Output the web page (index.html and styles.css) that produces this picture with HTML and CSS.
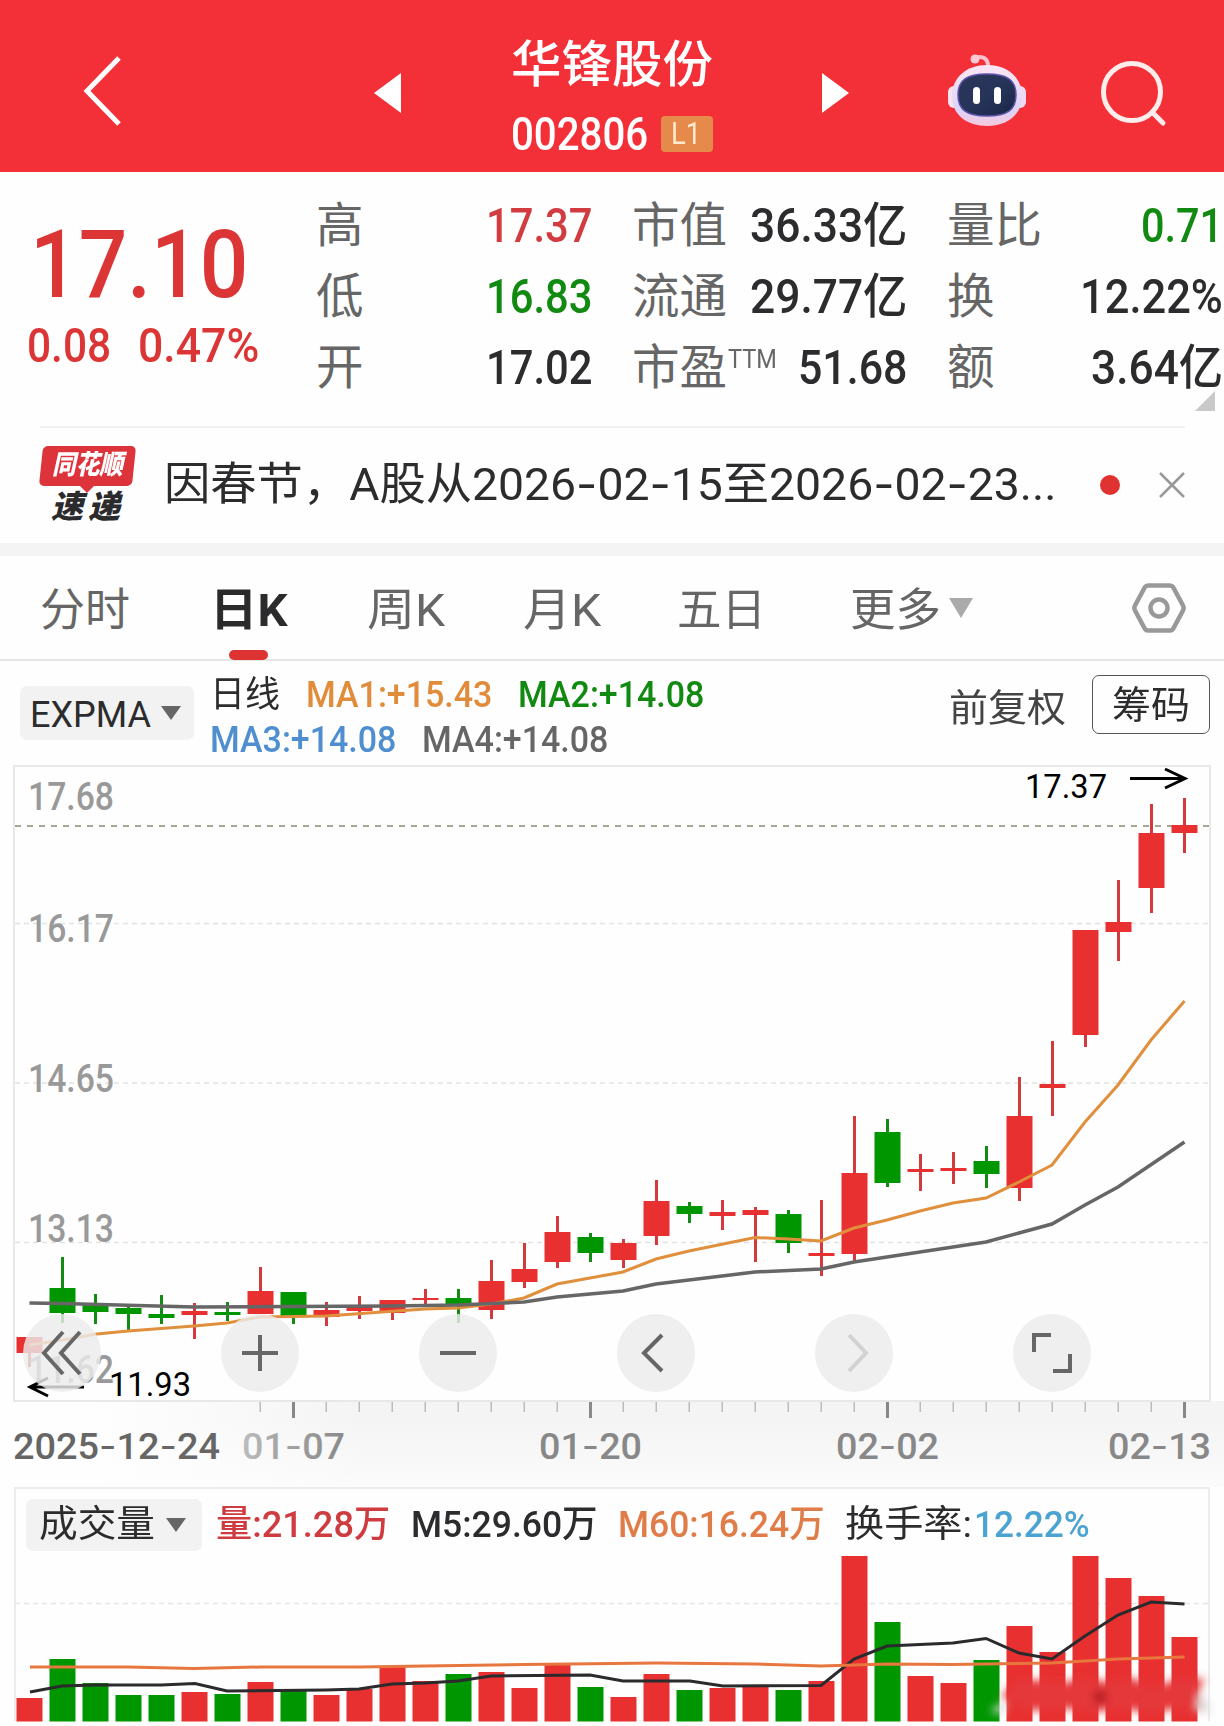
FILE: index.html
```
<!DOCTYPE html>
<html lang="zh-CN">
<head>
  <meta charset="UTF-8" />
  <meta name="viewport" content="width=device-width, initial-scale=1.0" />
  <title>华锋股份 002806</title>
  <link rel="stylesheet" href="styles.css">
</head>

<body>
  <!-- Header -->
  <header class="header">
    <svg class="back" width="40" height="70" viewBox="0 0 40 70"><path d="M37 2 L5 35 L37 68" /></svg>
    <svg class="prev" width="27" height="40" viewBox="0 0 27 40"><path d="M27 0 V40 L0 20 Z" /></svg>
    <div class="stock">
      <div class="stock-name"><span data-w="202">华锋股份</span></div>
      <div class="stock-code"><span data-w="137">002806</span><span class="level"><span data-w="30">L1</span></span></div>
    </div>
    <svg class="next" width="27" height="40" viewBox="0 0 27 40"><path d="M0 0 V40 L27 20 Z" /></svg>
    <svg class="robot" width="80" height="76" viewBox="0 0 80 76">
      <defs>
        <linearGradient id="head" x1="0" y1="0" x2="0" y2="1">
          <stop offset="0" stop-color="#fbe6f4" />
          <stop offset="0.75" stop-color="#ddd3f8" />
          <stop offset="1" stop-color="#f6c8dc" />
        </linearGradient>
        <linearGradient id="face" x1="0" y1="0" x2="1" y2="1">
          <stop offset="0" stop-color="#2a3558" />
          <stop offset="0.5" stop-color="#27345a" />
          <stop offset="1" stop-color="#1b2748" />
        </linearGradient>
      </defs>
      <path d="M28 7 C36 4 41 8 41 15" fill="none" stroke="#f9bfcb" stroke-width="4" />
      <circle cx="28" cy="8" r="4.5" fill="#fbc9d3" />
      <rect x="1" y="35" width="14" height="22" rx="6" fill="#f7e4f0" />
      <rect x="65" y="35" width="14" height="22" rx="6" fill="#f0daf2" />
      <path d="M40 14 C60 14 75 26 75 45 C75 64 60 75 40 75 C20 75 5 64 5 45 C5 26 20 14 40 14 Z" fill="url(#head)" />
      <path d="M40 23 C60 23 69 29 69 44 C69 59 60 65 40 65 C20 65 11 59 11 44 C11 29 20 23 40 23 Z" fill="url(#face)" stroke="#5c54a8" stroke-width="1.5" />
      <rect x="26" y="36" width="7" height="17" rx="3.5" fill="#fff" />
      <rect x="47" y="36" width="7" height="17" rx="3.5" fill="#fff" />
    </svg>
    <svg class="search" width="68" height="68" viewBox="0 0 68 68"><circle cx="32" cy="32" r="28.5" /><path d="M52 52 L63 63" /></svg>
  </header>

  <!-- Quote -->
  <section class="quote">
    <div class="last">
      <div class="price"><span data-w="218">17.10</span></div>
      <div class="change"><span data-w="84">0.08</span><span data-w="121">0.47%</span></div>
    </div>
    <dl class="col col-a">
      <div><dt>高</dt><dd class="up"><span data-w="106">17.37</span></dd></div>
      <div><dt>低</dt><dd class="down"><span data-w="106">16.83</span></dd></div>
      <div><dt>开</dt><dd><span data-w="106">17.02</span></dd></div>
    </dl>
    <dl class="col col-b">
      <div><dt>市值</dt><dd><span data-w="157">36.33亿</span></dd></div>
      <div><dt>流通</dt><dd><span data-w="157">29.77亿</span></dd></div>
      <div><dt>市盈<sup><span data-w="49">TTM</span></sup></dt><dd><span data-w="109">51.68</span></dd></div>
    </dl>
    <dl class="col col-c">
      <div><dt>量比</dt><dd class="down"><span data-w="82">0.71</span></dd></div>
      <div><dt>换</dt><dd><span data-w="143">12.22%</span></dd></div>
      <div><dt>额</dt><dd><span data-w="132">3.64亿</span></dd></div>
    </dl>
    <i class="corner"></i>
  </section>

  <!-- News -->
  <section class="news">
    <div class="news-logo">
      <div class="bubble"><span data-w="71">同花顺</span></div>
      <div class="express"><span>速</span><span>递</span></div>
    </div>
    <div class="news-text"><span data-w="892">因春节，A股从2026<b>-</b>02<b>-</b>15至2026<b>-</b>02<b>-</b>23...</span></div>
    <i class="dot"></i>
    <svg class="close" width="28" height="28" viewBox="0 0 28 28"><path d="M2 2 L26 26 M26 2 L2 26" /></svg>
  </section>

  <!-- Tabs -->
  <nav class="tabs">
    <a class="tab t1"><span data-w="90">分时</span></a>
    <a class="tab t2 active"><span data-w="78">日K</span></a>
    <a class="tab t3"><span data-w="78">周K</span></a>
    <a class="tab t4"><span data-w="78">月K</span></a>
    <a class="tab t5"><span data-w="89">五日</span></a>
    <a class="tab t6"><span data-w="91">更多</span><i class="caret"></i></a>
    <svg class="setting" width="54" height="50" viewBox="0 0 54 50"><path d="M16 2.5 H38 Q40 2.5 41 4 L51 22.5 Q52.300 25 51 27.500 L41 46 Q40 47.500 38 47.500 H16 Q14 47.500 13 46 L3 27.500 Q1.700 25 3 22.500 L13 4 Q14 2.500 16 2.500 Z" /><circle cx="27" cy="25" r="8.500" /></svg>
  </nav>

  <!-- Indicator -->
  <section class="indicator">
    <div class="select"><span data-w="121">EXPMA</span><i class="caret"></i></div>
    <div class="ma">
      <div class="ma-row"><span class="line" data-w="70">日线</span><span class="ma1" data-w="186">MA1:+15.43</span><span class="ma2" data-w="186">MA2:+14.08</span></div>
      <div class="ma-row"><span class="ma3" data-w="186">MA3:+14.08</span><span class="ma4" data-w="186">MA4:+14.08</span></div>
    </div>
    <div class="adjust"><span data-w="117">前复权</span></div>
    <div class="chips"><span data-w="78">筹码</span></div>
  </section>

  <!-- K line -->
  <section class="kline">
    <svg id="kchart" width="1224" height="722" viewBox="0 765 1224 722"></svg>
    <div class="tools">
      <button><svg width="42" height="46" viewBox="0 0 42 46"><path d="M22 2 L3 23 L22 44 M39 2 L20 23 L39 44" /></svg></button>
      <button><svg width="40" height="40" viewBox="0 0 40 40"><path d="M2 20 H38 M20 2 V38" /></svg></button>
      <button><svg width="40" height="40" viewBox="0 0 40 40"><path d="M2 20 H38" /></svg></button>
      <button><svg width="40" height="40" viewBox="0 0 40 40"><path d="M26 2 L8 20 L26 38" /></svg></button>
      <button class="off"><svg width="40" height="40" viewBox="0 0 40 40"><path d="M15 2 L32 20 L15 38" /></svg></button>
      <button><svg width="42" height="42" viewBox="0 0 42 42"><path d="M3 20 V3 H20 M39 22 V39 H22" /></svg></button>
    </div>
  </section>

  <!-- Volume -->
  <section class="volume">
    <div class="vol-head">
      <div class="select"><span data-w="116">成交量</span><i class="caret"></i></div>
      <span class="v1" data-w="174">量:21.28万</span>
      <span class="v2" data-w="187">M5:29.60万</span>
      <span class="v3" data-w="207">M60:16.24万</span>
      <span class="v4" data-w="127">换手率:</span>
      <span class="v5" data-w="116">12.22%</span>
    </div>
    <svg id="vchart" width="1224" height="175" viewBox="0 1551 1224 175"></svg>
  </section>

  <script src="script.js"></script>
</body>
</html>
```
FILE: styles.css
```
* {
  box-sizing: border-box;
  margin: 0;
  padding: 0;
}

body {
  width: 1224px;
  height: 1726px;
  overflow: hidden;
  background: #fefefe;
  color: #2c2c2e;
  font-family: Roboto, "Noto Sans CJK SC", sans-serif;
}

svg {
  display: block;
  flex: none;
}

i {
  display: block;
  flex: none;
}

[data-w] {
  display: inline-block;
  white-space: nowrap;
  transform-origin: 0 50%;
}

/* header */
.header {
  display: flex;
  align-items: flex-start;
  height: 172px;
  background: #f32f38;
  color: #fff;
}

.back {
  margin: 56px 0 0 82px;
  fill: none;
  stroke: #fff;
  stroke-width: 5;
}

.prev,
.next {
  margin-top: 73px;
  fill: #fff;
}

.prev {
  margin-left: 252px;
}

.stock {
  width: 202px;
  margin: 35px 0 0 110px;
}

.stock-name {
  height: 63px;
  font-size: 50px;
  font-weight: 500;
  line-height: 60px;
}

.stock-code {
  display: flex;
  align-items: center;
  height: 71px;
  font-size: 47px;
  font-weight: 500;
}

.level {
  height: 36px;
  width: 52px;
  margin-left: 13px;
  padding-left: 10px;
  border-radius: 4px;
  background: #e68a4b;
  color: #ffe9cf;
  font-size: 31px;
  font-weight: 400;
  line-height: 36px;
}

.next {
  margin-left: 109px;
}

.robot {
  margin: 51px 0 0 98px;
}

.search {
  margin: 60px 0 0 73px;
  fill: none;
  stroke: #ffeceb;
  stroke-width: 5;
  stroke-linecap: round;
}

/* quote */
.quote {
  position: relative;
  display: flex;
  height: 254px;
}

.last {
  width: 316px;
  padding-left: 27px;
  color: #dc3535;
}

.price {
  height: 124px;
  padding: 35px 0 0 3px;
  font-size: 95px;
  font-weight: 500;
  line-height: 116px;
}

.change {
  display: flex;
  gap: 27px;
  padding-top: 20px;
  font-size: 49px;
  font-weight: 500;
  line-height: 60px;
}

.col {
  padding-top: 18px;
}

.col > div {
  display: flex;
  justify-content: space-between;
  height: 71px;
  line-height: 72px;
}

.col-a {
  width: 276px;
}

.col-b {
  width: 275px;
  margin-left: 40px;
}

.col-c {
  width: 276px;
  margin-left: 40px;
}

.col dt {
  color: #666;
  font-size: 47.5px;
}

.col dt sup {
  display: inline-block;
  margin-left: 1px;
  font-size: 25px;
  line-height: 25px;
  vertical-align: 16px;
}

.col dd {
  font-size: 48px;
  font-weight: 500;
}

.col .up {
  color: #d23c40;
}

.col .down {
  color: #128a12;
}

.corner {
  position: absolute;
  right: 9px;
  bottom: 15px;
  border-left: 20px solid transparent;
  border-bottom: 20px solid #c9c9c9;
}

/* news */
.news {
  display: flex;
  align-items: center;
  height: 130px;
  border-bottom: 13px solid #f4f4f4;
  position: relative;
}

.news::before {
  content: "";
  position: absolute;
  left: 40px;
  right: 39px;
  top: 0;
  height: 2px;
  background: #f0f0f0;
}

.news-logo {
  flex: none;
  width: 164px;
  padding-left: 41px;
}

.bubble {
  position: relative;
  width: 93px;
  height: 40px;
  padding-left: 11px;
  color: #fff;
  font-size: 27px;
  font-weight: 900;
  line-height: 38px;
  z-index: 0;
}

.bubble span,
.express span {
  font-style: italic;
}

.bubble::before {
  content: "";
  position: absolute;
  inset: 0;
  border-radius: 5px;
  background: #dd333a;
  transform: skewX(-6deg);
  z-index: -1;
}

.bubble::after {
  content: "";
  position: absolute;
  left: 38px;
  top: 39px;
  border: 8px solid transparent;
  border-top-color: #dd333a;
  border-bottom: 0;
}

.express {
  display: flex;
  gap: 5px;
  height: 38px;
  padding-left: 10px;
  color: #2b2b2d;
  font-size: 32px;
  font-weight: 900;
  line-height: 43px;
}

.news-text {
  flex: none;
  width: 892px;
  font-size: 45px;
  line-height: 60px;
}

.news-text b,
.kline .dash {
  font-family: Inter, sans-serif;
  font-weight: 400;
}

.dot {
  width: 20px;
  height: 20px;
  margin-left: 44px;
  border-radius: 50%;
  background: #e13232;
}

.close {
  margin-left: 38px;
  fill: none;
  stroke: #999;
  stroke-width: 2.5;
}

/* tabs */
.tabs {
  display: flex;
  align-items: center;
  height: 105px;
  border-bottom: 2px solid #e6e6e6;
  color: #666;
  font-size: 45px;
}

.tab {
  position: relative;
  display: flex;
  align-items: center;
  height: 103px;
  padding-bottom: 2px;
}

.t1 { margin-left: 40px; }
.t2 { margin-left: 80px; }
.t3 { margin-left: 79px; }
.t4 { margin-left: 78px; }
.t5 { margin-left: 76px; }
.t6 { margin-left: 84px; }

.active {
  color: #2b2b2d;
  font-weight: 700;
}

.active::after {
  content: "";
  position: absolute;
  left: 19px;
  bottom: -1px;
  width: 39px;
  height: 10px;
  border-radius: 5px;
  background: #dd3333;
}

.caret {
  border: 10px solid transparent;
  border-top: 14px solid #666;
  border-bottom: 0;
}

.tab .caret {
  margin: 2px 0 0 8px;
  border-width: 20px 12px 0;
  border-top-color: #aaa;
}

.setting {
  margin-left: 159px;
  fill: none;
  stroke: #999;
  stroke-width: 4.5;
}

/* indicator */
.indicator {
  display: flex;
  align-items: flex-start;
  height: 104px;
  font-size: 36px;
}

.select {
  display: flex;
  align-items: center;
  border-radius: 7px;
  background: #f2f2f2;
}

.indicator .select {
  width: 174px;
  height: 54px;
  margin: 25px 0 0 20px;
  padding-left: 10px;
}

.indicator .select span {
  padding-top: 3px;
}

.indicator .caret {
  margin-left: 10px;
}

.ma {
  width: 739px;
  margin-left: 16px;
  padding-top: 11px;
}

.ma-row {
  display: flex;
  height: 45px;
  line-height: 46px;
}

.ma-row span {
  margin-right: 26px;
  font-weight: 500;
}

.ma-row .line {
  font-weight: 400;
}

.ma1 { color: #e08c3a; }
.ma2 { color: #128a12; }
.ma3 { color: #4f8fd0; }
.ma4 { color: #666; }

.adjust {
  width: 143px;
  padding-top: 22px;
  color: #444;
  font-size: 38px;
  line-height: 50px;
}

.chips {
  width: 118px;
  height: 59px;
  margin-top: 14px;
  padding-left: 19px;
  border: 1.5px solid #555;
  border-radius: 7px;
  font-size: 38px;
  line-height: 58px;
}

/* k line */
.kline {
  position: relative;
  height: 722px;
}

.kline text {
  font-size: 37px;
}

.tools {
  position: absolute;
  left: 23px;
  top: 549px;
  display: flex;
  gap: 120px;
}

.tools button {
  display: flex;
  align-items: center;
  justify-content: center;
  width: 78px;
  height: 78px;
  border: 0;
  border-radius: 50%;
  background: rgba(235, 235, 235, 0.82);
}

.tools svg {
  fill: none;
  stroke: #666;
  stroke-width: 4;
}

.tools .off svg {
  stroke: #d2d2d2;
}

/* volume */
.volume {
  height: 239px;
}

.vol-head {
  display: flex;
  align-items: flex-start;
  height: 64px;
  margin: 0 14px;
  padding-top: 10px;
  border: 2px solid #ececec;
  border-width: 2px 2px 0;
  font-size: 37px;
  line-height: 52px;
}

.vol-head .select {
  width: 176px;
  height: 52px;
  margin-left: 10px;
  padding-left: 13px;
}

.vol-head .caret {
  margin-left: 11px;
}

.v1 { margin-left: 14px; color: #cf3c40; }
.v2 { margin-left: 21px; }
.v3 { margin-left: 20px; color: #e07c48; }
.v4 { margin-left: 21px; }
.v5 { margin-left: 2px; color: #4ba3d2; }

.v1,
.v2,
.v3,
.v5 {
  font-weight: 500;
}
```
FILE: script.js
```
// squeeze each label to its own width
document.querySelectorAll("[data-w]").forEach((el) => {
  const w = parseFloat(el.dataset.w);
  const natural = el.offsetWidth;
  const margin = parseFloat(getComputedStyle(el).marginRight);
  el.style.transform = "scaleX(" + w / natural + ")";
  el.style.marginRight = margin + w - natural + "px";
});

const RED = "#e83030";
const GREEN = "#009600";
const X = (i) => 29.5 + 33 * i;

// color, high, body top, body bottom, low
const candles = [
  ["r", 1337, 1337, 1353, 1367], ["g", 1257, 1288, 1313, 1323], ["g", 1294, 1303, 1312, 1324], ["g", 1306, 1308, 1314, 1332],
  ["g", 1295, 1314, 1318, 1324], ["r", 1303, 1311, 1315, 1339], ["g", 1302, 1312, 1315, 1321], ["r", 1267, 1291, 1314, 1314],
  ["g", 1292, 1292, 1316, 1324], ["r", 1302, 1310, 1317, 1326], ["r", 1296, 1306, 1311, 1319], ["r", 1300, 1300, 1313, 1320],
  ["r", 1289, 1298, 1300, 1305], ["g", 1289, 1298, 1305, 1323], ["r", 1260, 1281, 1310, 1319], ["r", 1243, 1269, 1282, 1288],
  ["r", 1216, 1232, 1262, 1268], ["g", 1233, 1237, 1253, 1262], ["r", 1239, 1243, 1260, 1268], ["r", 1180, 1201, 1236, 1245],
  ["g", 1202, 1206, 1214, 1223], ["r", 1200, 1212, 1216, 1230], ["r", 1207, 1210, 1215, 1262], ["g", 1210, 1214, 1243, 1253],
  ["r", 1200, 1253, 1256, 1276], ["r", 1116, 1173, 1254, 1262], ["g", 1119, 1132, 1183, 1187], ["r", 1154, 1169, 1172, 1191],
  ["r", 1152, 1168, 1171, 1184], ["g", 1146, 1161, 1174, 1188], ["r", 1077, 1116, 1188, 1201], ["r", 1041, 1084, 1088, 1116],
  ["r", 930, 930, 1035, 1047], ["r", 880, 922, 932, 961], ["r", 804, 833, 888, 913], ["r", 798, 825, 833, 853]
];

const ma1 = "29.5,1345 62,1340 97,1334 128,1331 194,1326 227,1323 260,1317 326,1316 425,1309 458,1308 491,1304 524,1298 557,1284 590,1278 623,1272 656,1259 689,1251 755,1237.5 788,1239 821,1241 854,1228 887,1220 920,1211 953,1203 986,1198 1019,1182 1052,1165 1085,1122 1118,1085 1151,1040 1184.5,1001";
const ma2 = "29.5,1303 62,1303.5 194,1307 293,1306.5 392,1306 458,1305 524,1302 557,1297 623,1291 656,1284 755,1272 821,1269 854,1262 920,1252 986,1242 1019,1233 1052,1224 1085,1205 1118,1187 1184.5,1142";

function txt(s, x, y, w, fill, size, weight) {
  const label = s.replace(/-/g, '<tspan class="dash">-</tspan>');
  return `<text x="${x}" y="${y}" textLength="${w}" lengthAdjust="spacingAndGlyphs" fill="${fill}" font-weight="${weight || 500}" style="font-size:${size || 37}px">${label}</text>`;
}

let k = `<defs>
  <linearGradient id="ax" x1="0" x2="1"><stop offset="0.08" stop-color="#f4f4f4" stop-opacity="0"/><stop offset="0.3" stop-color="#f4f4f4"/></linearGradient>
  <linearGradient id="fade" x1="0" y1="0" x2="0" y2="1"><stop offset="0.2" stop-color="#fefefe" stop-opacity="0"/><stop offset="1" stop-color="#fefefe" stop-opacity="0.7"/></linearGradient>
  <linearGradient id="dt" x1="0" x2="1"><stop offset="0" stop-color="#bdbdbd"/><stop offset="0.3" stop-color="#a8a8a8"/><stop offset="1" stop-color="#8a8a8a"/></linearGradient>
</defs>
<rect x="0" y="1401" width="1224" height="86" fill="url(#ax)"/>
<rect x="0" y="1401" width="1224" height="86" fill="url(#fade)"/>
<rect x="14" y="766" width="1196" height="635" fill="#fefefe" stroke="#e8e8e8" stroke-width="2"/>`;

[923.5, 1083, 1242.5].forEach((y) => {
  k += `<path d="M15 ${y} H1209" stroke="#e2e2e2" stroke-width="1.5" stroke-dasharray="5 4"/>`;
});
k += `<path d="M15 826 H1209" stroke="#a6a693" stroke-width="2" stroke-dasharray="6 6"/>`;

candles.forEach(([c, hi, top, bot, lo], i) => {
  const col = c === "r" ? RED : GREEN;
  const wick = c === "r" ? "#d23a3e" : "#138a13";
  k += `<rect x="${X(i) - 1.5}" y="${hi}" width="3" height="${lo - hi}" fill="${wick}"/>`;
  k += `<rect x="${X(i) - 13}" y="${top}" width="26" height="${bot - top}" fill="${col}"/>`;
});

k += `<polyline points="${ma1}" fill="none" stroke="#e08f3c" stroke-width="3"/>`;
k += `<polyline points="${ma2}" fill="none" stroke="#666" stroke-width="3.5"/>`;

[["17.68", 810], ["16.17", 942], ["14.65", 1092], ["13.13", 1242], ["11.62", 1383]].forEach(([s, y]) => {
  k += txt(s, 28, y, 86, "#999", 38);
});
k += txt("17.37", 1025, 798, 82, "#000", 34, 400) + txt("11.93", 109, 1396, 82, "#000", 34, 400);
k += `<path d="M1130 778.500 H1184 M1165 769 L1185 778.500 L1165 788 M84 1387 H30 M48 1378 L30 1387 L48 1396" fill="none" stroke="#000" stroke-width="3"/>`;

// date axis
for (let i = 7; i < 36; i++) {
  const big = [8, 17, 26, 35].includes(i);
  k += `<rect x="${X(i) - (big ? 1.5 : 1)}" y="1402" width="${big ? 3 : 1.5}" height="${big ? 16 : 10}" fill="${big ? "#888" : "#bbb"}"/>`;
}
k += txt("2025-12-24", 13, 1459, 207, "#666");
k += txt("01-07", 242, 1459, 103, "url(#dt)");
k += txt("01-20", 539, 1459, 103, "#888");
k += txt("02-02", 836, 1459, 103, "#888");
k += txt("02-13", 1108, 1459, 103, "#888");
document.getElementById("kchart").innerHTML = k;

// volume bars, top edge of each
const vols = [
  1698, 1659, 1683, 1695, 1695, 1692, 1694, 1682, 1690, 1695, 1689, 1667, 1681, 1674, 1672, 1688, 1665, 1687,
  1697, 1674, 1690, 1688, 1687, 1690, 1681, 1556, 1622, 1676, 1683, 1660, 1626, 1652, 1556, 1578, 1596, 1637
];
const m60 = "30,1667 128,1667 194,1668.5 260,1667 359,1667 425,1666 524,1664.5 656,1663 755,1664 821,1666 887,1664 953,1664.5 1052,1663 1118,1659 1184.5,1657";
const m5 = "30,1692 62,1686 95,1685 161,1685 195,1683.5 227,1691 326,1690 359,1689 392,1684 425,1683 458,1681 491,1676 590,1675 623,1681 690,1681 723,1686 821,1685.5 854,1659 887,1646 953,1643 986,1638.5 1019,1653 1052,1659 1085,1636 1118,1615 1151,1602 1184.5,1604";

let v = `<defs><filter id="soft" x="-10%" y="-40%" width="120%" height="180%"><feGaussianBlur stdDeviation="4.5"/></filter></defs>
<path d="M15 1551 V1721 M1209 1551 V1721" stroke="#ececec" stroke-width="2"/>
<path d="M15 1603.500 H1209" stroke="#e6e6e6" stroke-width="1.5" stroke-dasharray="5 4"/>`;
vols.forEach((y, i) => {
  v += `<rect x="${X(i) - 13}" y="${y}" width="26" height="${1721.5 - y}" fill="${candles[i][0] === "r" ? RED : GREEN}"/>`;
});
v += `<polyline points="${m5}" fill="none" stroke="#2b2b2d" stroke-width="3"/>`;
v += `<polyline points="${m60}" fill="none" stroke="#e8773f" stroke-width="3"/>`;
v += `<g filter="url(#soft)"><path d="M1001 1697 L1018 1680 H1040 L1060 1684 L1080 1678 L1110 1682 L1135 1678 L1150 1688 L1175 1680 L1204 1678 L1197 1698 L1205 1712 L1180 1708 L1150 1713 L1120 1708 L1095 1712 L1060 1708 L1030 1711 Z" fill="#e5383a"/><circle cx="1100" cy="1697" r="7" fill="#b51d24"/><path d="M990 1711 L1004 1702 V1714 Z M1200 1690 L1212 1712 L1196 1710 Z" fill="#ddd"/></g>`;
document.getElementById("vchart").innerHTML = v;
```
